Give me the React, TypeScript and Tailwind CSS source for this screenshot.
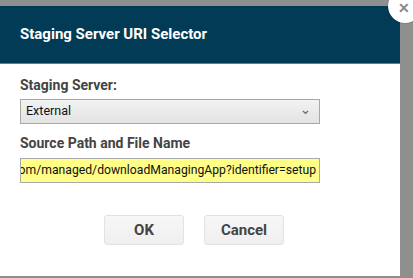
import React from 'react';

const url = 'https://staging.example.com/managed/downloadManagingApp?identifier=setup';

export default function App() {
  return (
    <div className="relative w-[413px] h-[278px] bg-[#8f8f8f] overflow-hidden pt-[6px] pb-[2px] pr-[13px]" style={{ fontFamily: 'Roboto, "Liberation Sans", sans-serif' }}>
      <div className="h-full bg-white flex flex-col">
        {/* header */}
        <div className="h-[58px] bg-[#013b56] flex items-center px-5 border-b border-[#5a7d8f]">
          <h1 className="text-white font-bold text-[15px] mt-[-1px]">Staging Server URI Selector</h1>
        </div>

        <div className="px-5 pt-[12px] flex flex-col">
          <label className="text-[14px] font-bold text-[#444] leading-[18px]">Staging Server:</label>
          <div className="mt-[5px] w-[300px] h-[25px] border border-[#a8a8a8] bg-gradient-to-b from-[#f2f2f2] to-[#e3e3e3] flex items-center justify-between pl-[5px] pr-[10px]">
            <span className="text-[12.5px] text-[#111]">External</span>
            <svg width="7" height="5" viewBox="0 0 7 5" className="mt-[2px]">
              <path d="M1 1 L3.5 3.5 L6 1" stroke="#666" strokeWidth="1.2" fill="none" />
            </svg>
          </div>

          <label className="mt-[10px] text-[14px] font-bold text-[#444] leading-[18px]">Source Path and File Name</label>
          <div className="mt-[6px] w-[300px] h-[25px] border border-[#a8a8a8] bg-[#ffff88] flex items-center justify-end overflow-hidden pr-[3px]">
            <span className="text-[12.2px] text-[#111] whitespace-nowrap">{url}</span>
          </div>
        </div>

        <div className="flex justify-center gap-5 mt-[32px] pr-[12px]">
          <button className="w-[80px] h-[30px] rounded-[3px] border border-[#e2e2e2] bg-gradient-to-b from-[#f7f7f7] to-[#efefef] text-[15px] font-bold text-[#444]">OK</button>
          <button className="w-[80px] h-[30px] rounded-[3px] border border-[#e2e2e2] bg-gradient-to-b from-[#f7f7f7] to-[#efefef] text-[15px] font-bold text-[#444]">Cancel</button>
        </div>
      </div>

      {/* close button */}
      <div className="absolute left-[388px] top-[-11px] w-[34px] h-[34px] rounded-full bg-white shadow-[0_0_2px_rgba(0,0,0,0.3)] flex items-center justify-center">
        <span className="text-[#8a8a8a] font-bold text-[14px] leading-[14px] mt-[3px] ml-[-3px]">✕</span>
      </div>
    </div>
  );
}
